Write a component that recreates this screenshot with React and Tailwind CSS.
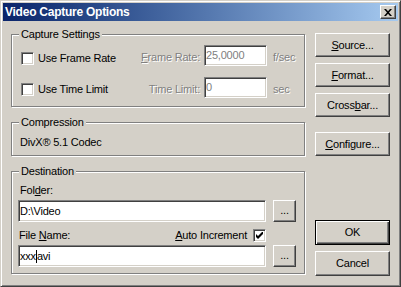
import React from "react";

function U({ children }) {
  return <span className="underline decoration-1 underline-offset-[1px]">{children}</span>;
}

function Btn({ children, className = "" }) {
  return (
    <div
      className={`flex items-center justify-center w-[75px] h-[24px] border border-t-white border-l-white border-r-[#404040] border-b-[#404040] shadow-[inset_-1px_-1px_0_#808080] ${className}`}
    >
      {children}
    </div>
  );
}

function SmallBtn() {
  return (
    <div className="flex items-start justify-center w-[23px] h-[22px] ml-[7px] border border-t-white border-l-white border-r-[#404040] border-b-[#404040] shadow-[inset_-1px_-1px_0_#808080] leading-[13px] pt-[3px]">
      ...
    </div>
  );
}

function Check({ checked }) {
  return (
    <div className="w-[13px] h-[13px] shrink-0 bg-white border border-t-[#808080] border-l-[#808080] border-r-white border-b-white shadow-[inset_1px_1px_0_#404040,inset_-1px_-1px_0_#d4d0c8] flex items-center justify-center">
      {checked && (
        <svg width="7" height="7" viewBox="0 0 7 7">
          <path d="M0 2 L2 4 L6 0 L7 0 L7 2 L2 7 L0 5 Z" fill="#000" />
        </svg>
      )}
    </div>
  );
}

function Field({ className = "", children }) {
  return (
    <div
      className={`flex items-center bg-white border border-t-[#808080] border-l-[#808080] border-r-white border-b-white shadow-[inset_1px_1px_0_#404040,inset_-1px_-1px_0_#d4d0c8] pl-[1px] leading-[13px] ${className}`}
    >
      {children}
    </div>
  );
}

function Group({ title, className = "", children }) {
  return (
    <div
      className={`relative w-[294px] border border-[#808080] shadow-[inset_1px_1px_0_#fff,1px_1px_0_#fff] ${className}`}
    >
      <span className="absolute -top-[7px] left-[7px] px-[2px] bg-[#d4d0c8] leading-[13px]">{title}</span>
      {children}
    </div>
  );
}

const dis = "text-[#808080] [text-shadow:1px_1px_0_#fff]";

export default function App() {
  return (
    <div className="w-[401px] h-[287px] bg-[#d4d0c8] border border-t-[#d4d0c8] border-l-[#d4d0c8] border-r-[#404040] border-b-[#404040] shadow-[inset_1px_1px_0_#fff,inset_-1px_-1px_0_#808080] p-[2px] font-['Liberation_Sans',Arial,sans-serif] text-[11px] tracking-[-0.2px] text-black leading-[13px]">
      {/* Title bar */}
      <div className="h-[18px] flex items-center justify-between bg-linear-to-r from-[#0a246a] to-[#a6caf0] pl-[2px] pr-[2px]">
        <span className="text-white font-bold text-[12px] tracking-[-0.25px] leading-[14px]">Video Capture Options</span>
        <div className="w-[16px] h-[14px] flex items-center justify-center bg-[#d4d0c8] border border-t-white border-l-white border-r-[#404040] border-b-[#404040] shadow-[inset_-1px_-1px_0_#808080]">
          <svg width="8" height="7" viewBox="0 0 8 7" className="mr-[1px]">
            <path d="M0 0 H2 L4 2.3 L6 0 H8 L5 3.5 L8 7 H6 L4 4.7 L2 7 H0 L3 3.5 Z" fill="#000" />
          </svg>
        </div>
      </div>

      {/* Body */}
      <div className="flex pl-[8px]">
        {/* Left column */}
        <div className="flex flex-col">
          <Group title="Capture Settings" className="mt-[13px] h-[73px]">
            <div className="flex items-start pl-[9px] mt-[10px] h-[21px]">
              <div className="flex items-center w-[110px] mt-[7px]">
                <Check />
                <span className="ml-[4px]">Use Frame Rate</span>
              </div>
              <span className={`w-[69px] text-right mt-[6px] ${dis}`}>
                <U>F</U>rame Rate:
              </span>
              <Field className="ml-[4px] w-[63px] h-[21px] text-[#808080]">25,0000</Field>
              <span className={`ml-[6px] mt-[6px] ${dis}`}>f/sec</span>
            </div>
            <div className="flex items-start pl-[9px] mt-[11px] h-[21px]">
              <div className="flex items-center w-[110px] mt-[6px]">
                <Check />
                <span className="ml-[4px]">Use Time Limit</span>
              </div>
              <span className={`w-[69px] text-right mt-[6px] ${dis}`}>Time Limit:</span>
              <Field className="ml-[4px] w-[63px] h-[21px] text-[#808080]">0</Field>
              <span className={`ml-[6px] mt-[6px] ${dis}`}>sec</span>
            </div>
          </Group>

          <Group title="Compression" className="mt-[15px] h-[34px]">
            <div className="mt-[13px] pl-[8px]">DivX® 5.1 Codec</div>
          </Group>

          <Group title="Destination" className="mt-[15px] h-[103px]">
            <div className="mt-[12px] pl-[8px]">
              Fol<U>d</U>er:
            </div>
            <div className="flex mt-[3px] pl-[6px]">
              <Field className="w-[248px] h-[22px]">D:\Video</Field>
              <SmallBtn />
            </div>
            <div className="flex items-center mt-[7px] w-[254px] pl-[7px]">
              <span>
                File <U>N</U>ame:
              </span>
              <span className="ml-auto">
                <U>A</U>uto Increment
              </span>
              <div className="ml-[6px]">
                <Check checked />
              </div>
            </div>
            <div className="flex mt-[3px] pl-[6px]">
              <Field className="w-[248px] h-[22px]">
                <span>xxx</span>
                <span className="inline-block w-[1px] h-[13px] bg-black" />
                <span>avi</span>
              </Field>
              <SmallBtn />
            </div>
          </Group>
        </div>

        {/* Right column */}
        <div className="flex flex-col ml-[10px] pt-[12px]">
          <Btn>
            <span>
              <U>S</U>ource...
            </span>
          </Btn>
          <Btn className="mt-[6px]">
            <span>
              <U>F</U>ormat...
            </span>
          </Btn>
          <Btn className="mt-[6px]">
            <span>
              Cross<U>b</U>ar...
            </span>
          </Btn>
          <Btn className="mt-[15px]">
            <span>
              <U>C</U>onfigure...
            </span>
          </Btn>
          <div className="mt-[64px] flex items-center justify-center w-[75px] h-[25px] border border-black shadow-[inset_1px_1px_0_#fff,inset_-1px_-1px_0_#404040,inset_-2px_-2px_0_#808080]">
            OK
          </div>
          <Btn className="mt-[6px] h-[25px]">Cancel</Btn>
        </div>
      </div>
    </div>
  );
}
